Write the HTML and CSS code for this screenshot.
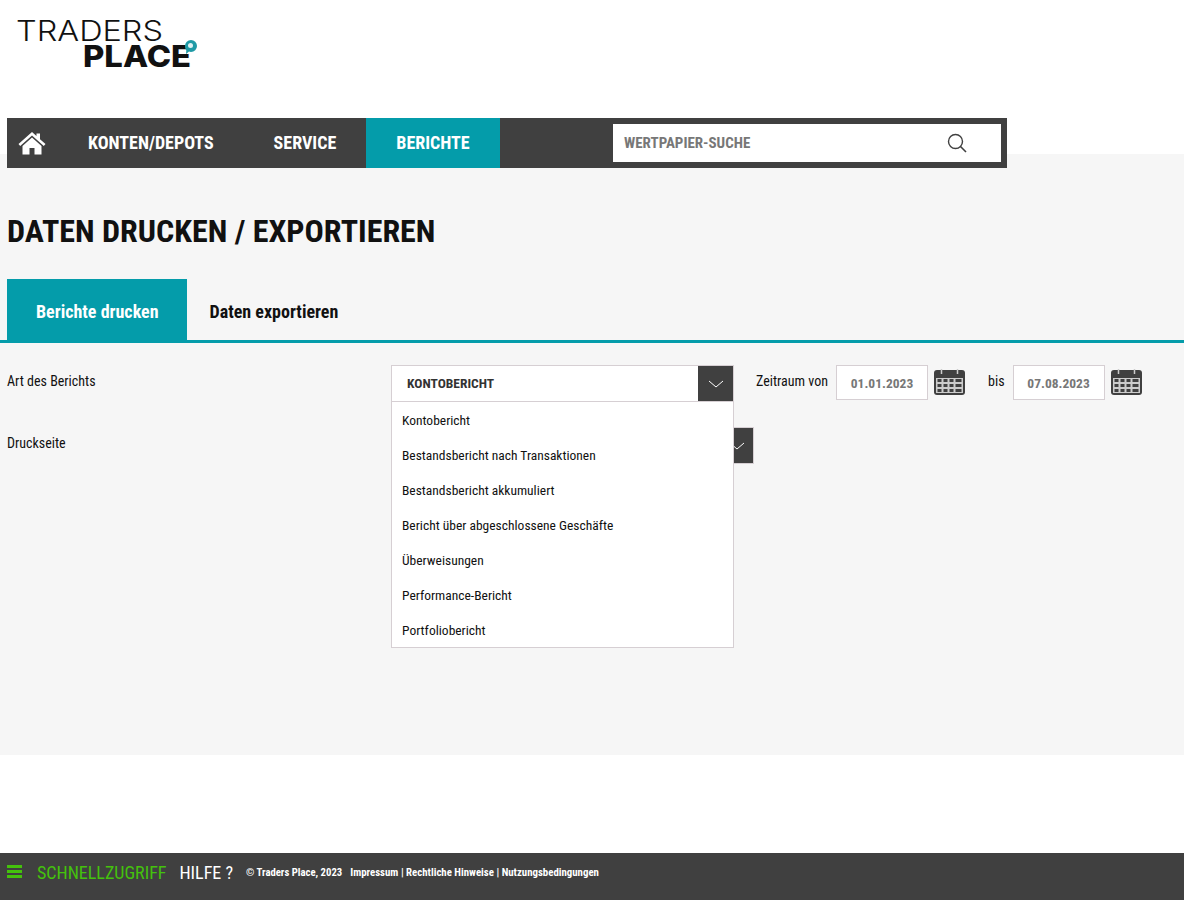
FILE: index.html
```html
<!DOCTYPE html>
<html lang="de">
<head>
    <meta charset="UTF-8">
    <title>Traders Place</title>
    <link rel="stylesheet" href="styles.css">
</head>
<body>
    <header class="top">
        <svg class="logo" width="200" height="90" viewBox="0 0 200 90">
            <text class="logo-line1" x="16" y="41" textLength="147" lengthAdjust="spacingAndGlyphs">TRADERS</text>
            <text class="logo-line2" x="83" y="66.500" textLength="108" lengthAdjust="spacingAndGlyphs">PLACE</text>
            <path d="M191 40a6 6 0 0 1 0 12a6 6 0 0 1-2-.4L186 54l.300-3.500A6 6 0 0 1 185 46a6 6 0 0 1 6-6z" fill="#1f9aa6"/>
            <circle cx="190.500" cy="45.500" r="2.500" fill="#dff1f3"/>
        </svg>
    </header>

    <nav class="mainnav">
        <a class="home" href="#home">
            <svg width="28" height="24" viewBox="0 0 28 24"><path d="M14 1L0.500 13l1.700 1.900L14 4.500l11.800 10.400 1.700-1.900L22 8.200V2.500h-3.500v2.600z" fill="#fff"/><path d="M14 6.500L4.500 15v8.500h7V17h5v6.500h7V15z" fill="#fff"/></svg>
        </a>
        <a class="nav-item" href="#konten">KONTEN/DEPOTS</a>
        <a class="nav-item" href="#service">SERVICE</a>
        <a class="nav-item active" href="#berichte">BERICHTE</a>
        <div class="search">
            <span>WERTPAPIER-SUCHE</span>
            <svg width="20" height="20" viewBox="0 0 20 20"><circle cx="8.500" cy="8.500" r="7" fill="none" stroke="#404040" stroke-width="1.400"/><path d="M13.500 13.500L19 19" stroke="#404040" stroke-width="1.600"/></svg>
        </div>
    </nav>

    <main class="content">
        <h1>DATEN DRUCKEN / EXPORTIEREN</h1>
        <div class="tabs">
            <a class="tab active" href="#drucken">Berichte drucken</a>
            <a class="tab" href="#export">Daten exportieren</a>
        </div>

        <div class="form-row row-first">
            <label class="form-label">Art des Berichts</label>
            <div class="select-wrap">
                <div class="select">
                    <span>KONTOBERICHT</span>
                    <span class="select-btn"><svg width="16" height="8" viewBox="0 0 16 8"><path d="M1 1l7 6 7-6" fill="none" stroke="#fff"/></svg></span>
                </div>
                <ul class="dropdown">
                    <li>Kontobericht</li>
                    <li>Bestandsbericht nach Transaktionen</li>
                    <li>Bestandsbericht akkumuliert</li>
                    <li>Bericht über abgeschlossene Geschäfte</li>
                    <li>Überweisungen</li>
                    <li>Performance-Bericht</li>
                    <li>Portfoliobericht</li>
                </ul>
            </div>
            <div class="dates">
                <span class="date-label">Zeitraum von</span>
                <span class="date-input">01.01.2023</span>
                <svg class="cal" width="31" height="26" viewBox="0 0 31 26"><use href="#cal-icon"/></svg>
                <span class="date-label bis">bis</span>
                <span class="date-input">07.08.2023</span>
                <svg class="cal" width="31" height="26" viewBox="0 0 31 26"><use href="#cal-icon"/></svg>
            </div>
        </div>

        <div class="form-row row-second">
            <label class="form-label">Druckseite</label>
            <div class="select-behind">
                <span class="select-btn small"><svg width="16" height="8" viewBox="0 0 16 8"><path d="M1 1l7 6 7-6" fill="none" stroke="#fff"/></svg></span>
            </div>
        </div>
    </main>

    <footer class="foot">
        <span class="burger"><i></i><i></i><i></i></span>
        <span class="quick">SCHNELLZUGRIFF</span>
        <span class="help">HILFE ?</span>
        <span class="copy">© Traders Place, 2023</span>
        <span class="links">Impressum | Rechtliche Hinweise | Nutzungsbedingungen</span>
    </footer>

    <svg width="0" height="0" class="defs">
        <symbol id="cal-icon" viewBox="0 0 31 26">
            <path d="M3 1h25a3 3 0 0 1 3 3v19a3 3 0 0 1-3 3H3a3 3 0 0 1-3-3V4a3 3 0 0 1 3-3z" fill="#404040"/>
            <path d="M7.500 0v5M23.500 0v5" stroke="#ccc" stroke-width="1.500"/>
            <path d="M2 9h27v15H2z" fill="#ccc"/>
            <path d="M3.500 10h4v3h-4zM9.500 10h4v3h-4zM15.500 10h4v3h-4zM21.500 10h6v3h-6zM3.500 15h4v3h-4zM9.500 15h4v3h-4zM15.500 15h4v3h-4zM21.500 15h6v3h-6zM3.500 20h4v3h-4zM9.500 20h4v3h-4zM15.500 20h4v3h-4zM21.500 20h6v3h-6z" fill="#404040"/>
        </symbol>
    </svg>
</body>
</html>
```

FILE: styles.css
```css
body {
    margin: 0;
    background-color: #fff;
    font-family: "Roboto Condensed", "Liberation Sans Narrow", Roboto, sans-serif;
    font-stretch: condensed;
    color: #111;
    height: 900px;
    display: flex;
    flex-direction: column;
    overflow: hidden;
}
.top {
    height: 118px;
    box-sizing: border-box;
}
.logo {
    display: block;
}
.logo-line1, .logo-line2 {
    font-family: Inter, sans-serif;
    font-stretch: normal;
    fill: #111;
}
.logo-line1 {
    font-size: 29px;
    font-weight: 300;
}
.logo-line2 {
    font-size: 30px;
    font-weight: 800;
}
.mainnav {
    display: flex;
    align-items: center;
    width: 1000px;
    height: 50px;
    margin-left: 7px;
    background-color: #404040;
    position: relative;
    z-index: 1;
}
.mainnav a {
    color: #fff;
    text-decoration: none;
}
.home {
    display: flex;
    width: 51px;
    padding-left: 11px;
    box-sizing: border-box;
}
.nav-item {
    font-size: 18px;
    font-weight: 700;
    line-height: 50px;
    padding: 0 30px;
}
.nav-item.active {
    background-color: #049caa;
}
.search {
    display: flex;
    align-items: center;
    justify-content: space-between;
    box-sizing: border-box;
    width: 388px;
    height: 38px;
    margin-left: auto;
    margin-right: 6px;
    padding: 0 34px 0 11px;
    background-color: #fff;
    color: #777;
    font-size: 15px;
    font-weight: 700;
}
.content {
    background-color: #f6f6f6;
    margin-top: -14px;
    height: 601px;
    box-sizing: border-box;
    padding-top: 14px;
}
h1 {
    margin: 43px 0 0 7px;
    font-size: 32px;
    line-height: 40px;
    font-weight: 700;
}
.tabs {
    display: flex;
    margin-top: 28px;
    height: 61px;
    padding-left: 7px;
    border-bottom: 3px solid #049caa;
}
.tab {
    font-size: 18px;
    font-weight: 700;
    line-height: 66px;
    color: #111;
    text-decoration: none;
    padding: 0 23px;
}
.tab.active {
    height: 64px;
    background-color: #049caa;
    color: #fff;
    padding: 0 28px 0 29px;
}
.form-row {
    display: flex;
    padding-left: 7px;
    font-size: 14px;
}
.row-first {
    margin-top: 22px;
    position: relative;
    z-index: 2;
    height: 62px;
}
.form-label {
    width: 384px;
    line-height: 32px;
    flex: none;
}
.select-wrap {
    width: 343px;
    flex: none;
    position: relative;
}
.select {
    display: flex;
    justify-content: space-between;
    box-sizing: border-box;
    height: 37px;
    padding-left: 15px;
    background-color: #fff;
    border: 1px solid #d6cfd3;
    font-weight: 700;
    font-size: 13.500px;
    line-height: 35px;
    color: #333;
}
.select-btn {
    display: flex;
    align-items: center;
    justify-content: center;
    width: 35px;
    height: 35px;
    background-color: #404040;
}
.dropdown {
    position: absolute;
    top: 36px;
    left: 0;
    right: 0;
    margin: 0;
    padding: 0;
    list-style: none;
    background-color: #fff;
    border: 1px solid #d6cfd3;
}
.dropdown li {
    height: 35px;
    line-height: 36px;
    padding-left: 10px;
    font-size: 13.500px;
}
.dates {
    display: flex;
    align-items: flex-start;
    margin-left: 22px;
}
.date-label {
    line-height: 32px;
}
.date-input {
    box-sizing: border-box;
    width: 92px;
    height: 35px;
    margin-left: 8px;
    background-color: #fff;
    border: 1px solid #d6cfd3;
    text-align: center;
    font-size: 13.500px;
    line-height: 35px;
    font-weight: 700;
    color: #777;
}
.cal {
    margin: 4px 0 0 6px;
}
.bis {
    margin-left: 23px;
}
.row-second {
    height: 36px;
    line-height: 32px;
}
.select-behind {
    display: flex;
    justify-content: flex-end;
    width: 363px;
    flex: none;
}
.select-btn.small {
    box-sizing: border-box;
    border: 1px solid #d6cfd3;
    height: 37px;
}
.foot {
    display: flex;
    align-items: flex-start;
    margin-top: auto;
    height: 47px;
    padding: 8px 0 0 7px;
    box-sizing: border-box;
    background-color: #404040;
    color: #fff;
}
.burger {
    display: flex;
    flex-direction: column;
    gap: 2px;
    margin-top: 4px;
    margin-right: 15px;
}
.burger i {
    display: block;
    width: 15px;
    height: 3px;
    background-color: #44c20c;
}
.quick {
    color: #44c20c;
    font-size: 18px;
    line-height: 24px;
    margin-right: 13px;
}
.help {
    font-size: 18px;
    line-height: 24px;
    margin-right: 13px;
}
.copy, .links {
    font-weight: 700;
    line-height: 24px;
}
.copy {
    font-size: 10.700px;
    margin-right: 8px;
}
.links {
    font-size: 10.830px;
}
.defs {
    position: absolute;
}
```
